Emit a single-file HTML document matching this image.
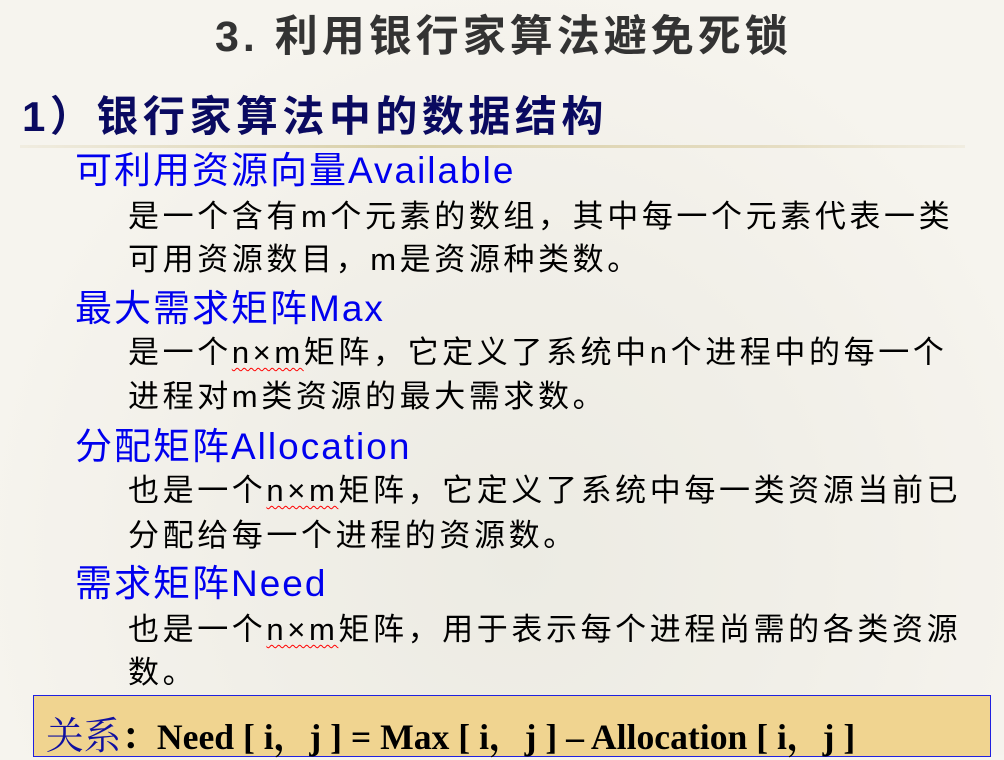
<!DOCTYPE html>
<html><head><meta charset="utf-8"><style>
html,body{margin:0;padding:0}
body{width:1004px;height:755px;position:relative;overflow:hidden;background:radial-gradient(ellipse at 520px 560px,#ecebe3 0,#f1efe8 40%,#f6f4ee 75%);font-family:"Liberation Sans","Noto Sans CJK SC",sans-serif}
.a{position:absolute;white-space:nowrap;line-height:1}
.t{left:215px;top:16px;font-size:43px;color:#333;letter-spacing:4px;font-weight:bold}
.h{left:22px;top:96px;font-size:42px;color:#0a0a60;letter-spacing:4.5px;font-weight:bold}
.line{position:absolute;left:20px;top:145px;width:945px;height:3px;background:linear-gradient(90deg,#f0ece0,#d8cfa8 40%,#e5ddc2 80%,#f0ece0)}
.b{left:75px;font-size:37px;color:#0000ee;letter-spacing:2px}
.p{left:128px;font-size:31px;color:#000;letter-spacing:3.6px}
.w{text-decoration:underline wavy red 1px;text-underline-offset:4px}
.box{position:absolute;left:33px;top:695px;width:958px;height:62px;background:#f0d490;border:1px solid #2020e0;box-sizing:border-box}
.box span{position:absolute;left:12px;top:9px;font-family:"Liberation Serif","Noto Serif CJK SC",serif;font-size:36px;font-weight:bold;white-space:nowrap;transform:scaleX(0.99);transform-origin:left}
</style></head><body>
<div class="a t">3. 利用银行家算法避免死锁</div>
<div class="a h">1）银行家算法中的数据结构</div>
<div class="line"></div>
<div class="a b" style="top:152px">可利用资源向量Available</div>
<div class="a p" style="top:201px">是一个含有m个元素的数组，其中每一个元素代表一类</div>
<div class="a p" style="top:244px">可用资源数目，m是资源种类数。</div>
<div class="a b" style="top:290px">最大需求矩阵Max</div>
<div class="a p" style="top:337px">是一个<span class="w">n×m</span>矩阵，它定义了系统中n个进程中的每一个</div>
<div class="a p" style="top:381px">进程对m类资源的最大需求数。</div>
<div class="a b" style="top:428px">分配矩阵Allocation</div>
<div class="a p" style="top:475px">也是一个<span class="w">n×m</span>矩阵，它定义了系统中每一类资源当前已</div>
<div class="a p" style="top:520px">分配给每一个进程的资源数。</div>
<div class="a b" style="top:565px">需求矩阵Need</div>
<div class="a p" style="top:614px">也是一个<span class="w">n×m</span>矩阵，用于表示每个进程尚需的各类资源</div>
<div class="a p" style="top:657px">数。</div>
<div class="box"><span><span style="position:static;color:#1010a0;font-weight:normal;font-family:'Noto Serif CJK SC',serif;font-size:38px">关系</span>：Need [ i，j ] = Max [ i，j ] – Allocation [ i，j ]</span></div>
</body></html>
